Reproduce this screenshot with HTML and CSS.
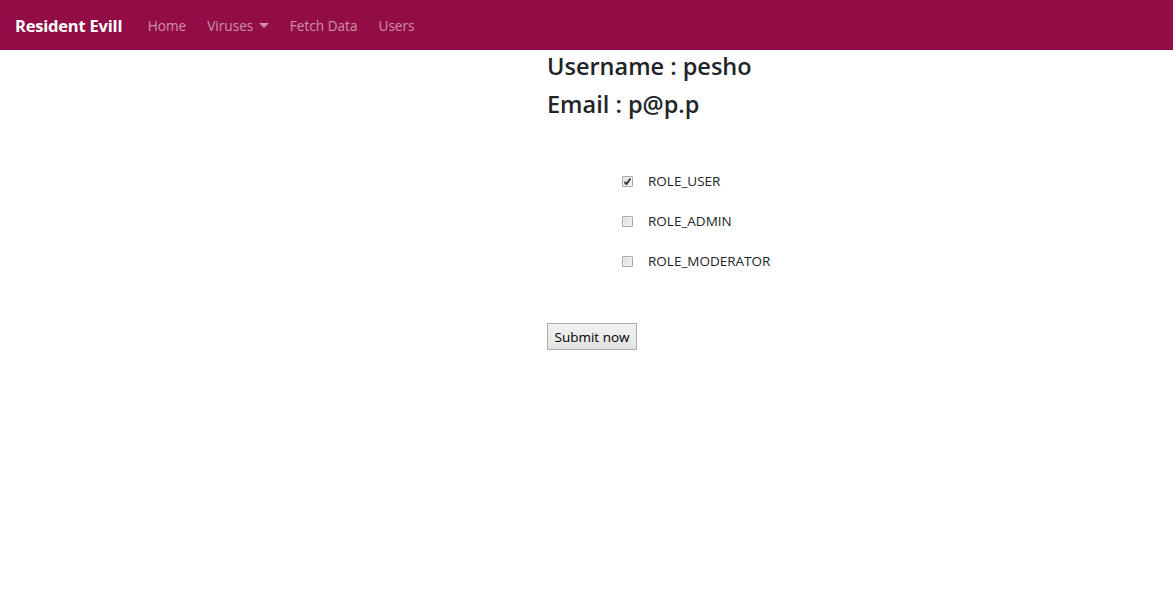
FILE: index.html
```html
<!DOCTYPE html>
<html>
<head>
<meta charset="utf-8">
<link rel="stylesheet" href="styles.css">
</head>
<body>
<nav class="navbar">
  <a class="brand" href="#">Resident Evill</a>
  <ul class="nav">
    <li><a class="nav-link" href="#">Home</a></li>
    <li><a class="nav-link dropdown" href="#">Viruses <span class="caret"></span></a></li>
    <li><a class="nav-link" href="#">Fetch Data</a></li>
    <li><a class="nav-link" href="#">Users</a></li>
  </ul>
</nav>
<main class="content">
  <form class="user-form">
    <h4 class="info">Username : pesho</h4>
    <h4 class="info">Email : p@p.p</h4>
    <div class="roles">
      <label class="role"><input type="checkbox" checked><span>ROLE_USER</span></label>
      <label class="role"><input type="checkbox"><span>ROLE_ADMIN</span></label>
      <label class="role"><input type="checkbox"><span>ROLE_MODERATOR</span></label>
    </div>
    <button type="button" class="submit">Submit now</button>
  </form>
</main>
</body>
</html>
```
FILE: styles.css
```css
html, body {
  margin: 0;
  padding: 0;
  background: #fff;
  font-family: "Open Sans", "Noto Sans", sans-serif;
  color: #212529;
}
.navbar {
  height: 50px;
  background: #920d46;
  display: flex;
  align-items: center;
  padding: 0 15px;
  box-sizing: border-box;
}
.brand {
  color: #fff;
  font-weight: 700;
  font-size: 16.5px;
  text-decoration: none;
  margin-right: 15px;
  letter-spacing: -0.2px;
}
.nav {
  list-style: none;
  display: flex;
  margin: 0;
  padding: 0;
}
.nav-link {
  display: block;
  padding: 0 10.5px;
  color: rgba(255,255,255,0.55);
  text-decoration: none;
  font-size: 13.6px;
}
.caret {
  display: inline-block;
  width: 0;
  height: 0;
  border-top: 5px solid rgba(255,255,255,0.55);
  border-left: 5px solid transparent;
  border-right: 5px solid transparent;
  vertical-align: 3px;
  margin-left: 2px;
}
.content {
  padding-left: 547px;
}
.user-form {
  display: flex;
  flex-direction: column;
  align-items: flex-start;
}
.info {
  margin: 0;
  font-size: 23.5px;
  font-weight: 600;
  line-height: 38px;
  margin-top: -3px;
}
.info + .info {
  margin-top: 0;
}
.roles {
  display: flex;
  flex-direction: column;
  margin: 38px 0 0 75px;
}
.role {
  display: flex;
  align-items: center;
  height: 40px;
  font-size: 13.5px;
}
.role input {
  -webkit-appearance: none;
  appearance: none;
  margin: 0 15px 0 0;
  width: 11px;
  height: 11px;
  border: 1px solid #a8a8a8;
  border-radius: 1px;
  background: linear-gradient(135deg, #dcdcdc, #f4f4f4);
  box-shadow: inset 0 0 0 1px #f0f0f0;
  box-sizing: border-box;
}
.role input:checked {
  background: url("data:image/svg+xml,%3Csvg xmlns='http://www.w3.org/2000/svg' width='9' height='9' viewBox='0 0 9 9'%3E%3Cpath d='M1.5 5 L3.5 7 L7.5 1.5' fill='none' stroke='%23333' stroke-width='1.8'/%3E%3C/svg%3E") center/9px 9px no-repeat, linear-gradient(135deg, #dcdcdc, #f4f4f4);
}
.submit {
  margin-top: 42px;
  font-family: "Open Sans", sans-serif;
  font-size: 13.5px;
  padding: 2px 6px;
  height: 27px;
  width: 90px;
  border: 1px solid #adadad;
  background: linear-gradient(#f2f2f2, #e3e3e3);
  border-radius: 0;
  color: #000;
}
```
